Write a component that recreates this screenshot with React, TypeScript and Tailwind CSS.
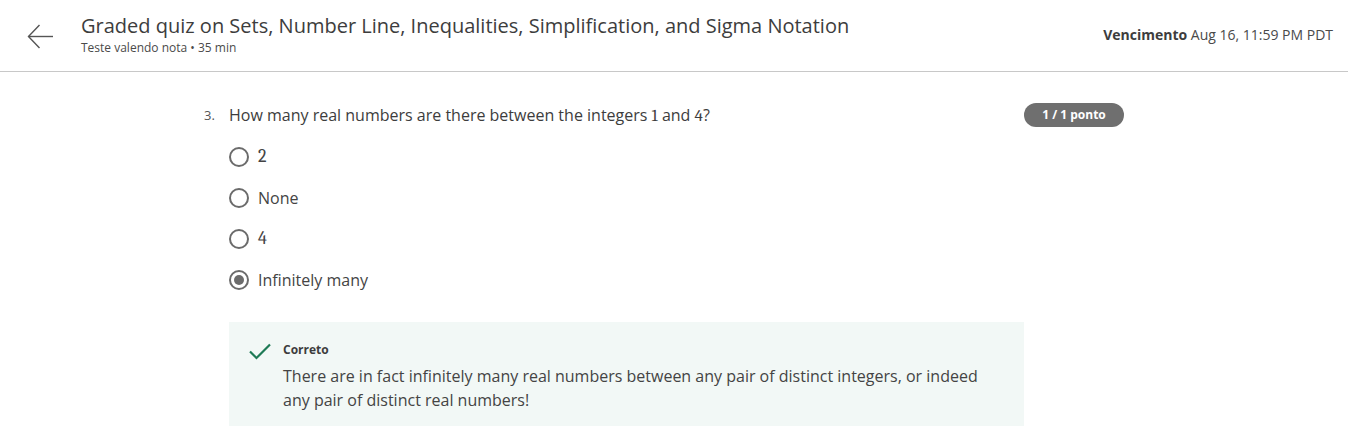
const options = [
  { label: "2", math: true, checked: false },
  { label: "None", math: false, checked: false },
  { label: "4", math: true, checked: false },
  { label: "Infinitely many", math: false, checked: true },
];

function Radio({ checked }: { checked: boolean }) {
  return (
    <span className="flex h-[20px] w-[20px] items-center justify-center rounded-full border-2 border-[#6b6b6b] bg-white">
      {checked && <span className="h-[10px] w-[10px] rounded-full bg-[#6b6b6b]" />}
    </span>
  );
}

export default function App() {
  return (
    <div className="min-h-screen bg-white text-[#3d3d3d] font-['Open_Sans',sans-serif]">
      {/* HEADER */}
      <div className="flex h-[72px] items-start border-b border-[#c8c8c8]">
        <button className="ml-[26px] mt-[22px] flex h-[28px] w-[28px] items-center justify-center text-[#555]">
          <svg width="27" height="27" viewBox="0 0 27 27" fill="none" stroke="currentColor" strokeWidth="1.4">
            <path d="M26 13.5H1.5" />
            <path d="M12.5 2L1.5 13.5L12.5 25" />
          </svg>
        </button>
        <div className="ml-[27px] mt-[12px]">
          <h1 className="text-[20px] leading-[28px] text-[#3d3d3d]">
            Graded quiz on Sets, Number Line, Inequalities, Simplification, and Sigma Notation
          </h1>
          <p className="text-[12px] leading-[16px] text-[#4a4a4a]">Teste valendo nota • 35 min</p>
        </div>
        <div className="ml-auto mr-[15px] mt-[25px] text-[14px] leading-[20px] text-[#4a4a4a]">
          <span className="font-bold text-[#3d3d3d]">Vencimento</span> Aug 16, 11:59 PM PDT
        </div>
      </div>

      {/* QUESTION */}
      <div className="ml-[204px] flex w-[920px] pt-[31px]">
        <div className="w-[25px] pt-[1px] text-[13px] leading-[22px] text-[#555]">3.</div>
        <div className="w-[795px]">
          <p className="text-[16px] leading-[24px]">
            How many real numbers are there between the integers{" "}
            <span className="font-serif text-[17px]">1</span> and{" "}
            <span className="font-serif text-[17px]">4</span>?
          </p>

          <div className="mt-[8px] flex flex-col">
            {options.map((o) => (
              <label key={o.label} className="flex h-[41px] items-center gap-[9px]">
                <Radio checked={o.checked} />
                <span
                  className={
                    o.math
                      ? "font-serif text-[18px] leading-[24px] text-[#444]"
                      : "text-[16px] leading-[24px] text-[#444]"
                  }
                >
                  {o.label}
                </span>
              </label>
            ))}
          </div>

          <div className="mt-[22px] flex gap-[12px] bg-[#f2f8f6] pl-[20px] pr-[30px] pt-[19px] pb-[14px]">
            <svg width="22" height="17" viewBox="0 0 22 17" fill="none" stroke="#1e7a55" strokeWidth="2.2" className="mt-[2px] shrink-0">
              <path d="M1 8.5L7.5 15L21 1.5" />
            </svg>
            <div>
              <p className="text-[12px] font-bold leading-[18px] text-[#3d3d3d]">Correto</p>
              <p className="mt-[5px] text-[16px] leading-[24px] text-[#444]">
                There are in fact infinitely many real numbers between any pair of distinct integers, or indeed any pair of distinct real numbers!
              </p>
            </div>
          </div>
        </div>
        <div className="flex w-[100px] items-start">
          <span className="flex h-[24px] w-[100px] items-center justify-center rounded-full bg-[#6f6f6f] text-[12px] font-bold text-white">
            1 / 1 ponto
          </span>
        </div>
      </div>
    </div>
  );
}
